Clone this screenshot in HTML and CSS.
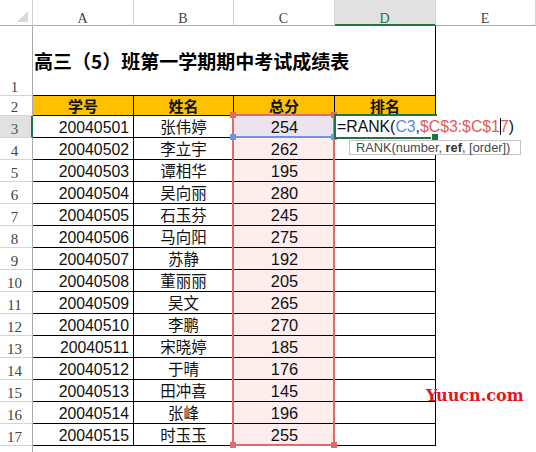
FILE: index.html
```html
<!DOCTYPE html>
<html lang="zh-CN">
<head>
<meta charset="utf-8">
<title>成绩表</title>
<link rel="stylesheet" href="styles.css">
</head>
<body>
<div class="sheet">
  <div class="grid">
    <div class="corner"><svg class="tri" width="11" height="11" viewBox="0 0 11 11"><polygon points="11,0 11,11 0,11" fill="#d9d9d9"/></svg></div>
    <div class="ch">A</div>
    <div class="ch">B</div>
    <div class="ch">C</div>
    <div class="ch ch-active">D</div>
    <div class="ch">E</div>

    <div class="rh">1</div>
    <div class="title">高三（5）班第一学期期中考试成绩表</div>
    <div class="e"></div>

    <div class="rh">2</div>
    <div class="c hd">学号</div>
    <div class="c hd">姓名</div>
    <div class="c hd">总分</div>
    <div class="c hd">排名</div>
    <div class="e"></div>

    <div class="rh rh-active">3</div>
    <div class="c num">20040501</div>
    <div class="c name">张伟婷</div>
    <div class="c score score-first">254</div>
    <div class="c"></div>
    <div class="e"></div>

    <div class="rh">4</div><div class="c num">20040502</div><div class="c name">李立宇</div><div class="c score">262</div><div class="c"></div><div class="e"></div>
    <div class="rh">5</div><div class="c num">20040503</div><div class="c name">谭相华</div><div class="c score">195</div><div class="c"></div><div class="e"></div>
    <div class="rh">6</div><div class="c num">20040504</div><div class="c name">吴向丽</div><div class="c score">280</div><div class="c"></div><div class="e"></div>
    <div class="rh">7</div><div class="c num">20040505</div><div class="c name">石玉芬</div><div class="c score">245</div><div class="c"></div><div class="e"></div>
    <div class="rh">8</div><div class="c num">20040506</div><div class="c name">马向阳</div><div class="c score">275</div><div class="c"></div><div class="e"></div>
    <div class="rh">9</div><div class="c num">20040507</div><div class="c name">苏静</div><div class="c score">192</div><div class="c"></div><div class="e"></div>
    <div class="rh">10</div><div class="c num">20040508</div><div class="c name">董丽丽</div><div class="c score">205</div><div class="c"></div><div class="e"></div>
    <div class="rh">11</div><div class="c num">20040509</div><div class="c name">吴文</div><div class="c score">265</div><div class="c"></div><div class="e"></div>
    <div class="rh">12</div><div class="c num">20040510</div><div class="c name">李鹏</div><div class="c score">270</div><div class="c"></div><div class="e"></div>
    <div class="rh">13</div><div class="c num">20040511</div><div class="c name">宋晓婷</div><div class="c score">185</div><div class="c"></div><div class="e"></div>
    <div class="rh">14</div><div class="c num">20040512</div><div class="c name">于晴</div><div class="c score">176</div><div class="c"></div><div class="e"></div>
    <div class="rh">15</div><div class="c num">20040513</div><div class="c name">田冲喜</div><div class="c score">145</div><div class="c"></div><div class="e"></div>
    <div class="rh">16</div><div class="c num">20040514</div><div class="c name">张峰</div><div class="c score">196</div><div class="c"></div><div class="e"></div>
    <div class="rh">17</div><div class="c num">20040515</div><div class="c name">时玉玉</div><div class="c score">255</div><div class="c"></div><div class="e"></div>

    <div class="rh">18</div><div class="e"></div><div class="e"></div><div class="e"></div><div class="e"></div><div class="e"></div>
  </div>

  <!-- formula reference highlight over column C -->
  <div class="ref-range"></div>
  <div class="ref-c3"></div>
  <span class="knob red k1"></span>
  <span class="knob red k2"></span>
  <span class="knob red k3"></span>
  <span class="knob red k4"></span>
  <span class="knob blue k5"></span>
  <span class="knob blue k6"></span>

  <!-- active cell in edit mode -->
  <div class="active-cell"></div>
  <div class="editor">=RANK(<span class="f-blue">C3</span>,<span class="f-red">$C$3:$C$1<span class="caret">7</span></span>)</div>
  <span class="fill-handle"></span>
  <div class="tip">RANK(number, <b>ref</b>, [order])</div>

  <div class="watermark">Yuucn.com</div>
</div>
</body>
</html>
```

FILE: styles.css
```css
html, body {
  margin: 0;
  padding: 0;
  background: #ffffff;
}

.sheet {
  position: relative;
  width: 536px;
  height: 452px;
  overflow: hidden;
  background: #ffffff;
}

.grid {
  display: grid;
  grid-template-columns: 33px 101px 100px 101px 101px 1fr;
  grid-template-rows: 26px 70px 20px repeat(16, 22px);
}

.grid > div {
  box-sizing: border-box;
}

/* corner + column headers */
.corner {
  border-right: 1px solid #d0d0d0;
  border-bottom: 1px solid #ababab;
  display: flex;
  align-items: flex-end;
  justify-content: flex-end;
  padding: 0 4px 3px 0;
}

.ch {
  border-right: 1px solid #d4d4d4;
  border-bottom: 1px solid #ababab;
  display: flex;
  align-items: flex-end;
  justify-content: center;
  font-family: "Liberation Serif", serif;
  font-size: 14px;
  line-height: 12px;
  color: #444444;
  padding-right: 1px;
}

.ch-active {
  background: #e1e1e1;
  color: #217346;
  border-bottom: 2px solid #217346;
  line-height: 11px;
}

/* row headers */
.rh {
  border-right: 1px solid #ababab;
  border-bottom: 1px solid #d4d4d4;
  display: flex;
  align-items: flex-end;
  justify-content: center;
  padding-right: 3px;
  font-family: "Liberation Serif", serif;
  font-size: 15px;
  line-height: 15px;
  color: #444444;
}

.rh-active {
  background: #e1e1e1;
  color: #217346;
  border-right: 2px solid #217346;
  padding-right: 2px;
}

/* title (merged A1:D1) */
.title {
  grid-column: span 4;
  border-right: 1px solid #000000;
  border-bottom: 1px solid #000000;
  display: flex;
  align-items: center;
  padding-left: 1px;
  font-family: "Noto Sans CJK SC", sans-serif;
  font-weight: 700;
  font-size: 19px;
  color: #000000;
}

/* table cells */
.c {
  border-right: 1px solid #000000;
  border-bottom: 1px solid #000000;
  display: flex;
  align-items: center;
  justify-content: center;
  color: #111111;
}

.e {
  border: 0;
}

.hd {
  background: #ffc000;
  font-family: "Noto Sans CJK SC", sans-serif;
  font-weight: 700;
  font-size: 15px;
  line-height: 19px;
}

.num {
  justify-content: flex-end;
  padding: 2px 4px 0 0;
  font-family: "Liberation Sans", Arial, sans-serif;
  font-size: 15.8px;
  line-height: 19px;
}

.name {
  font-family: "Noto Sans CJK SC", sans-serif;
  font-size: 15.5px;
  line-height: 21px;
}

.score {
  background: #fdeded;
  padding-top: 2px;
  padding-left: 1px;
  font-family: "Liberation Sans", Arial, sans-serif;
  font-size: 16.4px;
  line-height: 19px;
}

.score-first {
  background: #ebe4ee;
}

/* reference highlight overlays */
.ref-range {
  position: absolute;
  left: 232px;
  top: 114px;
  width: 103px;
  height: 332px;
  box-sizing: border-box;
  border: 2px solid #e36a6a;
}

.ref-c3 {
  position: absolute;
  left: 234px;
  top: 136px;
  width: 99px;
  height: 2px;
  background: #7094e4;
}

.knob {
  position: absolute;
  width: 6px;
  height: 6px;
  box-sizing: border-box;
}

.knob.red { background: #e36a6a; }
.knob.blue { background: #7094e4; }

.k1 { left: 230px; top: 112px; }
.k2 { left: 331px; top: 112px; }
.k3 { left: 230px; top: 442px; }
.k4 { left: 331px; top: 442px; }
.k5 { left: 230px; top: 134px; }
.k6 { left: 331px; top: 134px; }

/* active cell D3 */
.active-cell {
  position: absolute;
  left: 334px;
  top: 114px;
  width: 103px;
  height: 25px;
  box-sizing: border-box;
  border: 2px solid #217346;
  border-right: 0;
}

.editor {
  position: absolute;
  left: 336px;
  top: 116px;
  width: 180px;
  height: 21px;
  background: #ffffff;
  padding-left: 1px;
  box-sizing: border-box;
  font-family: "Liberation Sans", Arial, sans-serif;
  font-size: 15.8px;
  line-height: 21px;
  color: #111111;
  white-space: nowrap;
}

.f-blue { color: #5f86dc; }
.f-red { color: #e05a5a; }

.caret {
  box-shadow: inset 1px 0 0 #000000;
}

.fill-handle {
  position: absolute;
  left: 432px;
  top: 134px;
  width: 6px;
  height: 6px;
  background: #217346;
  box-shadow: 0 0 0 1px #ffffff;
}

.tip {
  position: absolute;
  left: 349px;
  top: 140px;
  width: 172px;
  height: 15px;
  box-sizing: border-box;
  border: 1px solid #c4c4c4;
  background: #ffffff;
  padding-left: 6px;
  font-family: "Liberation Sans", Arial, sans-serif;
  font-size: 12.8px;
  line-height: 13px;
  color: #4a4a4a;
  white-space: nowrap;
}

.tip b {
  color: #333333;
}

.watermark {
  position: absolute;
  left: 426px;
  top: 386px;
  font-family: "DejaVu Serif", serif;
  font-weight: 700;
  font-size: 16px;
  line-height: 20px;
  color: #e8141c;
  white-space: nowrap;
}
```
